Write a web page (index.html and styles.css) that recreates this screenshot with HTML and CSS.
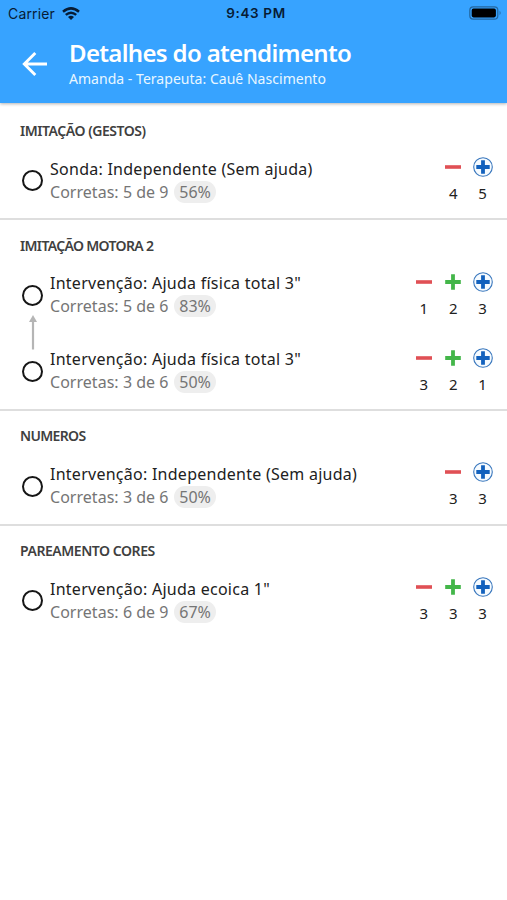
FILE: index.html
```
<!DOCTYPE html>
<html lang="pt-BR">
<head>
<meta charset="utf-8">
<title>Detalhes do atendimento</title>
<link rel="stylesheet" href="styles.css">
</head>
<body>
<svg width="0" height="0" class="defs">
  <symbol id="minus" viewBox="0 0 20 20"><path d="M2 10H18" stroke="#e05055" stroke-width="3.6"/></symbol>
  <symbol id="plus" viewBox="0 0 20 20"><path d="M2.2 10H17.8M10 2.2V17.8" stroke="#43b649" stroke-width="3.8"/></symbol>
  <symbol id="cplus" viewBox="0 0 20 20"><circle cx="10" cy="10" r="9.3" fill="#f6fbff" stroke="#3977bd" stroke-width="1.1"/><path d="M3.3 10H16.7M10 3.3V16.7" stroke="#1261bd" stroke-width="3.8"/></symbol>
</svg>
<header class="header">
  <div class="status">
    <div class="carrier"><span>Carrier</span>
      <svg width="18" height="13" viewBox="0 0 18 13" fill="none" stroke="#071c35" stroke-width="2.5"><path d="M1 4.8Q9-2 17 4.8M3.8 7.9Q9 3.5 14.2 7.9"/><path d="M6 10Q9 7.7 12 10L9 12.9Z" fill="#071c35" stroke="none"/></svg>
    </div>
    <span class="clock">9:43 PM</span>
    <svg class="battery" width="33" height="14" viewBox="0 0 33 14"><rect x=".8" y=".8" width="28" height="12.4" rx="3.4" fill="none" stroke="#24679f" stroke-width="1.2"/><rect x="2.7" y="2.6" width="24.2" height="8.8" rx="1.8"/><path d="M30.6 4.8Q32.6 7 30.6 9.2Z" fill="#24679f"/></svg>
  </div>
  <div class="bar">
    <svg class="back" width="26" height="26" viewBox="0 0 26 26" fill="none" stroke="#fff" stroke-width="2.9"><path d="M25 13H2.5M13.3 2L2.3 13L13.3 24"/></svg>
    <div><h1>Detalhes do atendimento</h1><p class="subtitle">Amanda - Terapeuta: Cauê Nascimento</p></div>
  </div>
</header>
<main>
  <section>
    <h2>IMITAÇÃO (GESTOS)</h2>
    <div class="row"><i class="dot"></i><div class="info"><p class="name">Sonda: Independente (Sem ajuda)</p><p class="score">Corretas: 5 de 9 <b>56%</b></p></div>
      <div class="counts"><div><svg><use href="#minus"/></svg>4</div><div><svg><use href="#cplus"/></svg>5</div></div></div>
  </section>
  <section>
    <h2 class="tight">IMITAÇÃO MOTORA 2</h2>
    <div class="row"><i class="dot"></i><div class="info"><p class="name">Intervenção: Ajuda física total 3"</p><p class="score">Corretas: 5 de 6 <b>83%</b></p></div>
      <div class="counts"><div><svg><use href="#minus"/></svg>1</div><div><svg><use href="#plus"/></svg>2</div><div><svg><use href="#cplus"/></svg>3</div></div>
      <svg class="link" width="10" height="35" viewBox="0 0 10 35"><path d="M5 5V34.5" stroke="#b5b5b5" stroke-width="2.2"/><path d="M5 0L9 7H1Z" fill="#b5b5b5"/></svg></div>
    <div class="row"><i class="dot"></i><div class="info"><p class="name">Intervenção: Ajuda física total 3"</p><p class="score">Corretas: 3 de 6 <b>50%</b></p></div>
      <div class="counts"><div><svg><use href="#minus"/></svg>3</div><div><svg><use href="#plus"/></svg>2</div><div><svg><use href="#cplus"/></svg>1</div></div></div>
  </section>
  <section>
    <h2 class="tight">NUMEROS</h2>
    <div class="row"><i class="dot"></i><div class="info"><p class="name">Intervenção: Independente (Sem ajuda)</p><p class="score">Corretas: 3 de 6 <b>50%</b></p></div>
      <div class="counts"><div><svg><use href="#minus"/></svg>3</div><div><svg><use href="#cplus"/></svg>3</div></div></div>
  </section>
  <section>
    <h2>PAREAMENTO CORES</h2>
    <div class="row"><i class="dot"></i><div class="info"><p class="name">Intervenção: Ajuda ecoica 1"</p><p class="score">Corretas: 6 de 9 <b>67%</b></p></div>
      <div class="counts"><div><svg><use href="#minus"/></svg>3</div><div><svg><use href="#plus"/></svg>3</div><div><svg><use href="#cplus"/></svg>3</div></div></div>
  </section>
</main>
</body>
</html>
```

FILE: styles.css
```
* { box-sizing: border-box; }
body { margin: 0; background: #fff; font-family: "Noto Sans", sans-serif; color: #212121; }
h1, h2, p { margin: 0; white-space: nowrap; }
svg { display: block; }
.defs { position: absolute; }
.header { height: 103.4px; background: #37a3ff; box-shadow: 0 1px 3px rgba(0,0,0,.3); }
.status { height: 27px; padding: 0 7px 0 8px; display: grid; grid-template-columns: 1fr auto 1fr; align-items: center; font: 14px/27px Inter, sans-serif; color: #071c35; }
.carrier { display: flex; gap: 7px; align-items: center; letter-spacing: .15px; }
.clock { font-weight: 600; font-size: 13.5px; letter-spacing: .65px; position: relative; left: 2px; }
.battery { justify-self: end; position: relative; left: 2px; top: -1px; }
.bar { display: flex; padding-left: 22px; gap: 21px; }
.back { margin-top: 24px; }
h1 { font-size: 24px; line-height: 32px; font-weight: 600; color: #fff; margin-top: 10px; letter-spacing: -.67px; }
.subtitle { font-size: 14px; line-height: 20px; color: #e9f7ff; letter-spacing: .03px; }
main { padding-top: 2px; }
section { padding-bottom: 1px; box-shadow: inset 0 -2px #dedede; }
section:last-child { box-shadow: none; }
h2 { height: 38.05px; padding: 15.6px 0 0 20px; font-size: 14px; line-height: 20px; font-weight: 600; color: #404040; letter-spacing: -.45px; }
.tight { letter-spacing: -.66px; }
.row { height: 75.75px; display: flex; align-items: center; padding: 0 10px 0 22px; position: relative; }
.dot { width: 21px; height: 21px; border: 2px solid #161616; border-radius: 50%; flex: none; margin-top: -1px; }
.info { margin: -1.4px 0 0 7px; flex: 1; }
.name { font-size: 16px; line-height: 23px; letter-spacing: .26px; }
.score { font-size: 16px; line-height: 23px; color: #757575; letter-spacing: .03px; }
.score b { font-weight: 400; background: #eee; border-radius: 11px; padding: 0 5.5px; margin-left: 1px; height: 22px; line-height: 22px; display: inline-block; }
.counts { display: flex; gap: .3px; margin-top: -2.6px; }
.counts > div { width: 29px; display: flex; flex-direction: column; align-items: center; font-size: 15px; line-height: 20px; gap: 6px; }
.counts svg { width: 20px; height: 20px; }
.link { position: absolute; left: 27.5px; top: 57px; }
```
